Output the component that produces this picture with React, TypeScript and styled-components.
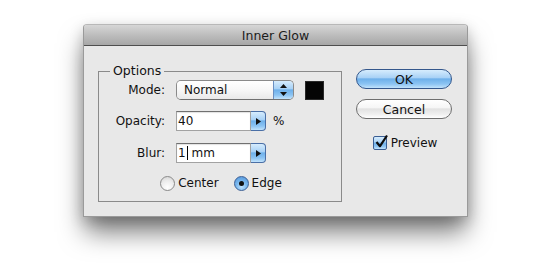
import React from "react";
import styled, { createGlobalStyle } from "styled-components";

const Global = createGlobalStyle`
  html, body { margin: 0; padding: 0; background: #ffffff; }
  body { width: 550px; height: 272px; overflow: hidden; font-family: "DejaVu Sans", "Liberation Sans", sans-serif; font-size: 12px; color: #111; }
`;

const aquaBlue = `linear-gradient(to bottom, #d6ecfd 0%, #a9d2f6 42%, #6eb0ea 50%, #8cc4f3 78%, #c2e3fc 100%)`;
const aquaWhite = `linear-gradient(to bottom, #ffffff 0%, #f6f6f6 42%, #e2e2e2 50%, #efefef 78%, #ffffff 100%)`;

const Page = styled.div`
  padding: 24px 0 0 83px;
`;

const Window = styled.div`
  width: 385px;
  box-sizing: border-box;
  border-radius: 4px 4px 0 0;
  border: 1px solid #9a9a9a;
  border-top-color: #b8b8b8;
  background: #e8e8e8;
  box-shadow: 0 17px 26px -2px rgba(0, 0, 0, 0.52), 0 4px 14px rgba(0, 0, 0, 0.18);
`;

const TitleBar = styled.div`
  height: 20px;
  border-radius: 3px 3px 0 0;
  border-bottom: 1px solid #4e4e4e;
  background: linear-gradient(to bottom, #d6d6d6 0%, #bdbdbd 50%, #a7a7a7 100%);
  display: flex;
  align-items: center;
  justify-content: center;
  font-size: 12.5px;
  color: #1c1c1c;
`;

const Body = styled.div`
  height: 170px;
  box-sizing: border-box;
  display: flex;
  align-items: flex-start;
  padding: 23px 15px 0 14px;
  gap: 14px;
`;

const Group = styled.div`
  position: relative;
  margin-top: 2px;
  width: 244px;
  height: 131px;
  box-sizing: border-box;
  border: 1px solid #8a8a8a;
  padding: 8px 0 0 0;
`;

const GroupTitle = styled.span`
  position: absolute;
  top: -9px;
  left: 11px;
  padding: 0 3px;
  background: #e8e8e8;
  font-size: 12.5px;
  line-height: 16px;
  color: #111;
`;

const Form = styled.div`
  display: grid;
  grid-template-columns: 66px 1fr;
  column-gap: 11px;
  align-items: center;
`;

const Label = styled.span<{ $top: number }>`
  justify-self: end;
  margin-top: ${(p) => p.$top}px;
  line-height: 20px;
`;

const Controls = styled.div<{ $top: number; $gap: number }>`
  display: flex;
  align-items: center;
  gap: ${(p) => p.$gap}px;
  margin-top: ${(p) => p.$top}px;
  height: 20px;
`;

const Popup = styled.div`
  width: 118px;
  height: 20px;
  box-sizing: border-box;
  border: 1px solid #8a8a8a;
  border-bottom-color: #707070;
  border-radius: 5px;
  display: flex;
  overflow: hidden;
`;

const PopupText = styled.div`
  flex: 1;
  background: linear-gradient(to bottom, #ffffff 0%, #f7f7f7 50%, #e9e9e9 100%);
  padding-left: 7px;
  line-height: 18px;
`;

const PopupArrows = styled.div`
  width: 19px;
  border-left: 1px solid #6a8fc2;
  background: ${aquaBlue};
  display: flex;
  align-items: center;
  justify-content: center;
`;

const Swatch = styled.div`
  width: 19px;
  height: 19px;
  box-sizing: border-box;
  background: #050505;
  border: 1px solid #2a2a2a;
`;

const Field = styled.div`
  display: flex;
  height: 20px;
`;

const Input = styled.div`
  width: 75px;
  height: 20px;
  box-sizing: border-box;
  background: #fff;
  border: 1px solid #a2a2a2;
  border-top-color: #707070;
  box-shadow: inset 0 1px 1px rgba(0, 0, 0, 0.12);
  padding-left: 1px;
  line-height: 18px;
  display: flex;
  align-items: center;
  white-space: pre;
`;

const Caret = styled.span`
  display: inline-block;
  width: 1px;
  height: 14px;
  background: #000;
  margin: 0 0 0 1px;
`;

const Stepper = styled.div`
  width: 15px;
  height: 20px;
  box-sizing: border-box;
  border: 1px solid #4a6fa6;
  border-left: none;
  border-radius: 0 4px 4px 0;
  background: ${aquaBlue};
  display: flex;
  align-items: center;
  justify-content: center;
`;

const Unit = styled.span`
  line-height: 20px;
`;

const RadioRow = styled.div`
  grid-column: 1 / -1;
  margin-top: 12px;
  display: flex;
  justify-content: center;
  align-items: center;
  gap: 15px;
  padding-left: 2px;
  height: 16px;
`;

const RadioItem = styled.label`
  display: flex;
  align-items: center;
  gap: 3px;
`;

const RadioDot = styled.span<{ $on?: boolean }>`
  width: 15px;
  height: 15px;
  box-sizing: border-box;
  border-radius: 50%;
  border: 1px solid ${(p) => (p.$on ? "#3b5f95" : "#8a8a8a")};
  background: ${(p) =>
    p.$on
      ? "radial-gradient(circle at 50% 75%, #bfe2fd 0%, #7ab8ee 45%, #4e92d8 100%)"
      : "radial-gradient(circle at 50% 80%, #ffffff 0%, #ececec 55%, #d0d0d0 100%)"};
  display: flex;
  align-items: center;
  justify-content: center;
  &::after {
    content: "";
    display: ${(p) => (p.$on ? "block" : "none")};
    width: 5px;
    height: 5px;
    border-radius: 50%;
    background: #111;
  }
`;

const Side = styled.div`
  display: flex;
  flex-direction: column;
  align-items: center;
  width: 96px;
`;

const Button = styled.div<{ $primary?: boolean }>`
  width: 96px;
  height: 20px;
  box-sizing: border-box;
  border-radius: 10px;
  border: 1px solid ${(p) => (p.$primary ? "#34578c" : "#6e6e6e")};
  background: ${(p) => (p.$primary ? aquaBlue : aquaWhite)};
  display: flex;
  align-items: center;
  justify-content: center;
  font-size: 12.5px;
  color: #111;
  & + & {
    margin-top: 10px;
  }
`;

const CheckRow = styled.label`
  margin-top: 17px;
  display: flex;
  align-items: center;
  gap: 4px;
  padding-left: 2px;
`;

const CheckBox = styled.span`
  width: 14px;
  height: 14px;
  box-sizing: border-box;
  border: 1px solid #3a5e94;
  border-radius: 2px;
  background: ${aquaBlue};
  position: relative;
  & > svg {
    position: absolute;
    left: 0px;
    top: -3px;
  }
`;

const TriRight = () => (
  <svg width="5" height="7" viewBox="0 0 5 7">
    <path d="M0 0 L5 3.5 L0 7 Z" fill="#111" />
  </svg>
);

const UpDown = () => (
  <svg width="7" height="12" viewBox="0 0 7 12">
    <path d="M3.5 0 L7 4 L0 4 Z" fill="#111" />
    <path d="M0 8 L7 8 L3.5 12 Z" fill="#111" />
  </svg>
);

const Check = () => (
  <svg width="15" height="15" viewBox="0 0 15 15">
    <path d="M2.5 8 L6 12.2 L13 1.5" fill="none" stroke="#0d0d0d" strokeWidth="2.2" strokeLinejoin="round" />
  </svg>
);

export default function App() {
  return (
    <>
      <Global />
      <Page>
        <Window>
          <TitleBar>Inner Glow</TitleBar>
          <Body>
            <Group>
              <GroupTitle>Options</GroupTitle>
              <Form>
                <Label $top={0}>Mode:</Label>
                <Controls $top={0} $gap={11}>
                  <Popup>
                    <PopupText>Normal</PopupText>
                    <PopupArrows>
                      <UpDown />
                    </PopupArrows>
                  </Popup>
                  <Swatch />
                </Controls>
                <Label $top={11}>Opacity:</Label>
                <Controls $top={11} $gap={7}>
                  <Field>
                    <Input>40</Input>
                    <Stepper>
                      <TriRight />
                    </Stepper>
                  </Field>
                  <Unit>%</Unit>
                </Controls>
                <Label $top={12}>Blur:</Label>
                <Controls $top={12} $gap={7}>
                  <Field>
                    <Input>
                      1<Caret />{" mm"}
                    </Input>
                    <Stepper>
                      <TriRight />
                    </Stepper>
                  </Field>
                </Controls>
                <RadioRow>
                  <RadioItem>
                    <RadioDot />
                    Center
                  </RadioItem>
                  <RadioItem>
                    <RadioDot $on />
                    Edge
                  </RadioItem>
                </RadioRow>
              </Form>
            </Group>
            <Side>
              <Button $primary>OK</Button>
              <Button>Cancel</Button>
              <CheckRow>
                <CheckBox>
                  <Check />
                </CheckBox>
                Preview
              </CheckRow>
            </Side>
          </Body>
        </Window>
      </Page>
    </>
  );
}
